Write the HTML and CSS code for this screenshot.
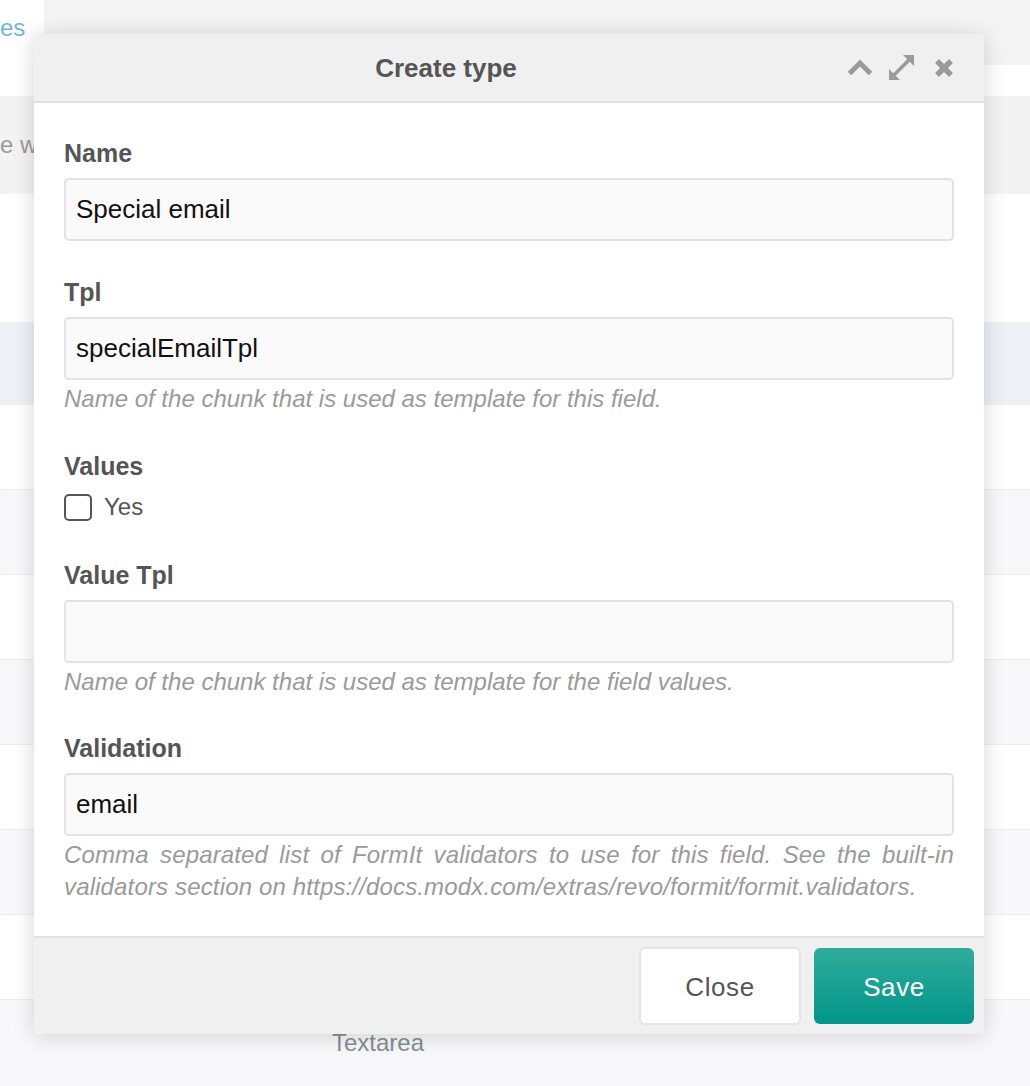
FILE: index.html
```html
<!DOCTYPE html>
<html lang="en">
<head>
<meta charset="utf-8">
<title>Create type</title>
<link rel="stylesheet" href="styles.css">
</head>
<body>
<div class="page">
  <div class="tabbar">
    <div class="tab">es</div>
    <div class="tab-rest"></div>
  </div>
  <div class="toolbar"></div>
  <div class="desc">e wi</div>
  <div class="gridhead"></div>
  <div class="row row-sel"></div>
  <div class="row"></div>
  <div class="row row-alt"></div>
  <div class="row"></div>
  <div class="row row-alt"></div>
  <div class="row"></div>
  <div class="row row-alt"></div>
  <div class="row"></div>
  <div class="row row-alt row-last"><span class="cell-type">Textarea</span></div>
</div>

<div class="modal">
  <div class="modal-head">
    <div class="modal-title">Create type</div>
    <div class="modal-tools">
      <svg class="tool tool-up" width="26" height="17" viewBox="0 0 26 17"><polyline points="2.5,14.5 13,4 23.5,14.5" fill="none" stroke="#9a9a9a" stroke-width="5" stroke-linejoin="miter"/></svg>
      <svg class="tool tool-max" width="25" height="25" viewBox="0 0 25 25"><line x1="5" y1="20" x2="20" y2="5" stroke="#9a9a9a" stroke-width="3.6"/><polygon points="25,0 25,11 14,0" fill="#9a9a9a"/><polygon points="0,25 0,14 11,25" fill="#9a9a9a"/></svg>
      <svg class="tool tool-close" width="20" height="20" viewBox="0 0 20 20"><line x1="3" y1="3" x2="17" y2="17" stroke="#9a9a9a" stroke-width="5.5"/><line x1="17" y1="3" x2="3" y2="17" stroke="#9a9a9a" stroke-width="5.5"/></svg>
    </div>
  </div>
  <div class="modal-body">
    <div class="field">
      <div class="label">Name</div>
      <div class="input">Special email</div>
    </div>
    <div class="field">
      <div class="label">Tpl</div>
      <div class="input">specialEmailTpl</div>
      <div class="hint">Name of the chunk that is used as template for this field.</div>
    </div>
    <div class="field">
      <div class="label">Values</div>
      <div class="check-row"><span class="checkbox"></span><span class="check-label">Yes</span></div>
    </div>
    <div class="field">
      <div class="label">Value Tpl</div>
      <div class="input"></div>
      <div class="hint">Name of the chunk that is used as template for the field values.</div>
    </div>
    <div class="field field-last">
      <div class="label">Validation</div>
      <div class="input">email</div>
      <div class="hint hint-wide">Comma separated list of FormIt validators to use for this field. See the built-in validators section on https://docs.modx.com/extras/revo/formit/formit.validators.</div>
    </div>
  </div>
  <div class="modal-foot">
    <div class="btn btn-close">Close</div>
    <div class="btn btn-save">Save</div>
  </div>
</div>
</body>
</html>
```

FILE: styles.css
```css
* { box-sizing: border-box; }
html, body { margin: 0; padding: 0; }
body {
  font-family: "Liberation Sans", Arial, Helvetica, sans-serif;
  background: #f8f8fa;
  width: 1030px;
  height: 1086px;
  overflow: hidden;
  position: relative;
}

/* background page */
.page { width: 1030px; }
.tabbar { display: flex; height: 65px; }
.tab {
  width: 44px;
  background: #ffffff;
  color: #72b5dd;
  font-size: 24px;
  line-height: 30px;
  padding-top: 13px;
  white-space: nowrap;
  overflow: hidden;
}
.tab-rest { flex: 1; background: #f4f4f4; }
.toolbar { height: 31px; background: #ffffff; }
.desc {
  height: 98px;
  background: #f3f3f3;
  color: #9a9a9a;
  font-size: 24px;
  line-height: 30px;
  padding-top: 34px;
  white-space: nowrap;
  overflow: hidden;
}
.gridhead { height: 128px; background: #ffffff; }
.row { height: 85px; background: #ffffff; border-bottom: 1px solid #ededed; }
.row-sel { height: 83px; background: #edf1f5; border-bottom: none; }
.row-alt { background: #f8f8fa; }
.row-last { height: 86px; border-bottom: none; }
.cell-type {
  display: block;
  padding-left: 332px;
  line-height: 86px;
  font-size: 24px;
  color: #858d95;
}

/* modal */
.modal {
  position: absolute;
  left: 34px;
  top: 34px;
  width: 950px;
  height: 1000px;
  background: #ffffff;
  border-radius: 5px;
  box-shadow: 0 2px 22px rgba(0, 0, 0, 0.16);
  overflow: hidden;
  display: flex;
  flex-direction: column;
}
.modal-head {
  height: 69px;
  flex: none;
  background: #f0f0f0;
  border-bottom: 2px solid #e0e0e0;
  display: flex;
  align-items: center;
  padding: 0 30px;
}
.modal-title {
  flex: 1;
  text-align: center;
  font-size: 26px;
  font-weight: bold;
  color: #555555;
  line-height: 30px;
}
.modal-tools {
  width: 126px;
  display: flex;
  justify-content: flex-end;
  align-items: center;
}
.tool { display: block; flex: none; }
.tool-max { margin-left: 16px; }
.tool-close { margin-left: 20px; }

.modal-body {
  height: 833px;
  flex: none;
  padding: 35px 30px 30px;
}
.field { margin-bottom: 36px; }
.field-last { margin-bottom: 0; }
.label {
  font-size: 25px;
  font-weight: bold;
  color: #555555;
  line-height: 30px;
  margin-bottom: 10px;
}
.input {
  height: 63px;
  background: #fafafa;
  border: 2px solid #e2e2e2;
  border-radius: 5px;
  padding: 0 10px;
  font-size: 26px;
  color: #111111;
  display: flex;
  align-items: center;
}
.hint {
  margin-top: 3px;
  margin-bottom: 1px;
  font-size: 24px;
  line-height: 31.5px;
  font-style: italic;
  color: #9a9a9a;
  text-align: justify;
}
.hint-wide { letter-spacing: 0.15px; }
.check-row {
  margin-top: 5px;
  height: 33px;
  display: flex;
  align-items: center;
}
.checkbox {
  width: 28px;
  height: 27px;
  border: 2.5px solid #555555;
  border-radius: 5px;
  background: #ffffff;
  flex: none;
}
.check-label {
  margin-left: 12px;
  font-size: 24px;
  color: #555555;
}

.modal-foot {
  flex: 1;
  background: #f0f0f0;
  border-top: 2px solid #e0e0e0;
  display: flex;
  justify-content: flex-end;
  align-items: center;
  padding: 0 10px;
}
.btn {
  display: flex;
  align-items: center;
  justify-content: center;
  font-size: 26px;
  letter-spacing: 0.6px;
  border-radius: 6px;
  padding-top: 3px;
}
.btn-close {
  width: 162px;
  height: 78px;
  background: #ffffff;
  border: 2px solid #e5e5e5;
  color: #555555;
}
.btn-save {
  width: 160px;
  height: 76px;
  margin-left: 13px;
  background: linear-gradient(to bottom, #30ac9b, #02958a);
  color: #ffffff;
}
```
